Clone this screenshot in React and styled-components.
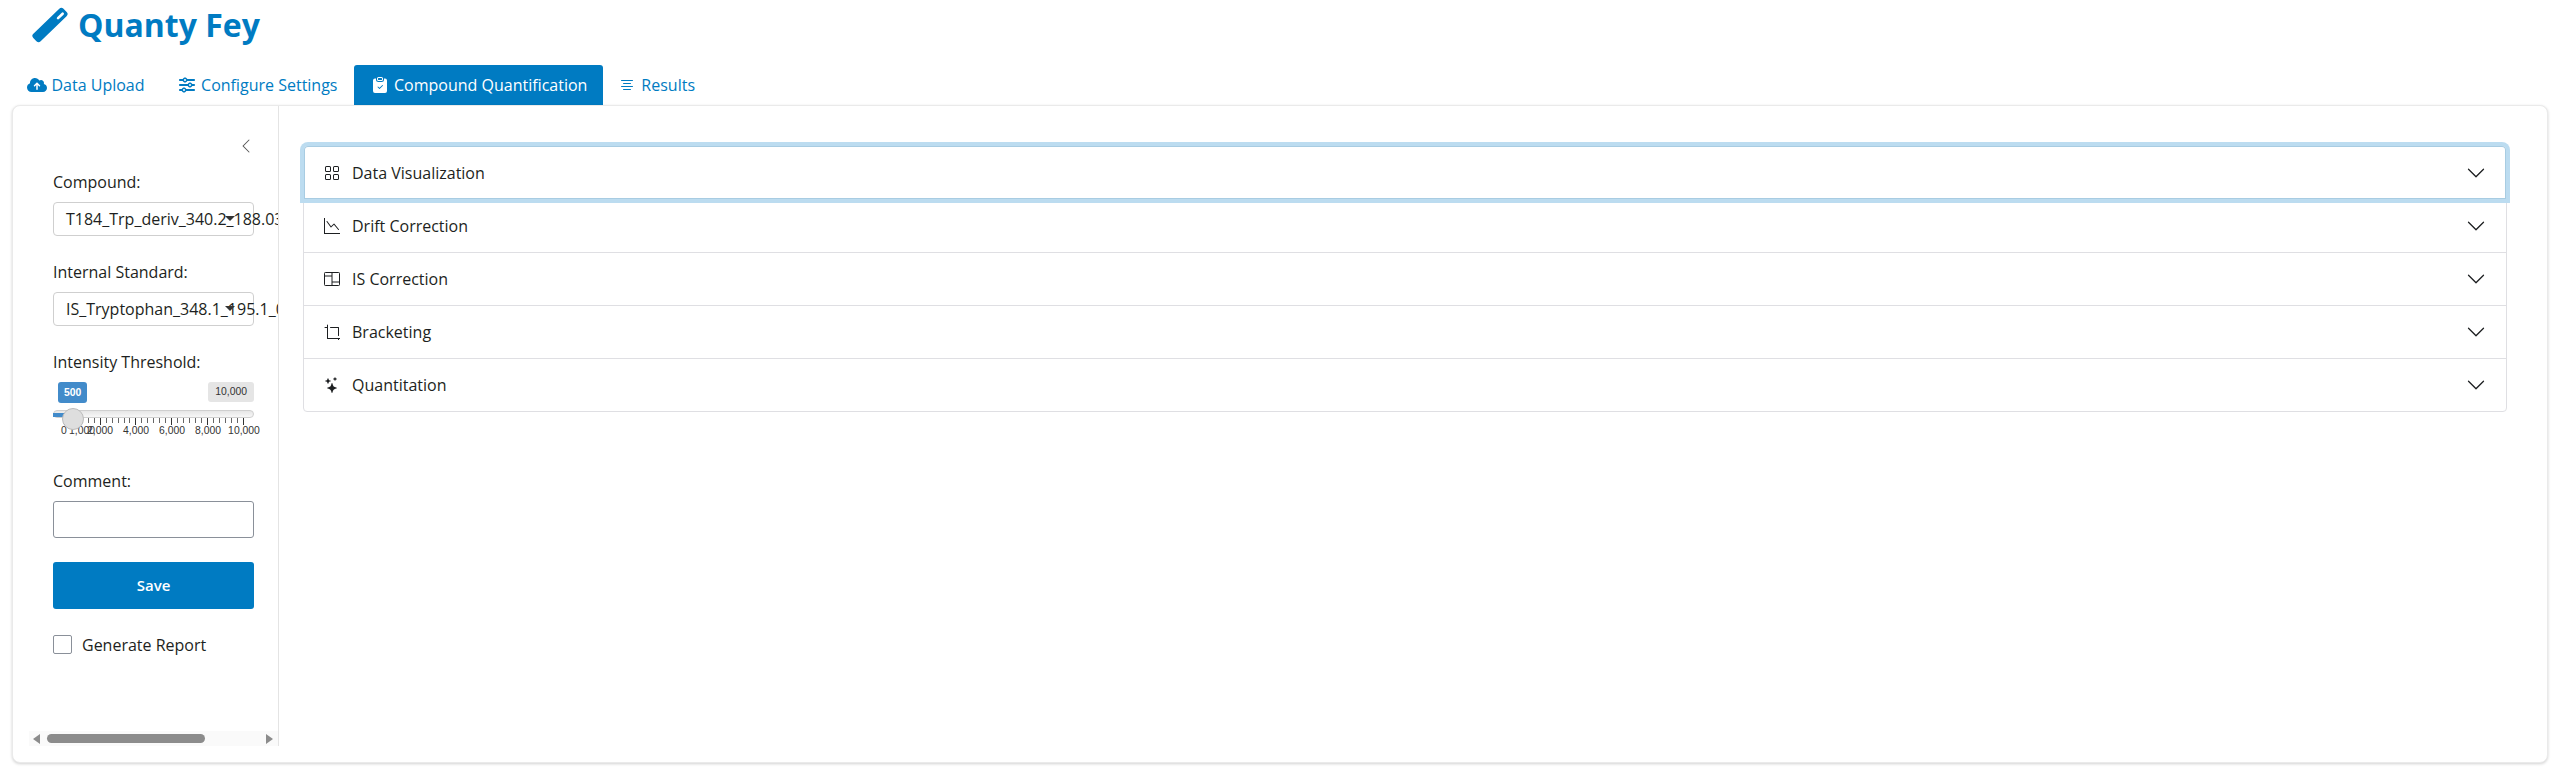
import React from "react";
import styled, { createGlobalStyle } from "styled-components";
import {
  BsClipboardCheckFill,
  BsTextCenter,
  BsGrid,
  BsGraphDown,
  BsCrop,
  BsStars,
  BsChevronDown,
  BsChevronLeft,
} from "react-icons/bs";
import { FaCloudArrowUp, FaSliders } from "react-icons/fa6";

const Global = createGlobalStyle`
  html, body { margin: 0; padding: 0; background: #fff; }
  * { box-sizing: border-box; }
  body {
    font-family: "Open Sans", "Liberation Sans", sans-serif;
    font-size: 16px;
    color: #1d1f21;
  }
`;

const Page = styled.div`
  width: 2559px;
  height: 783px;
  display: flex;
  flex-direction: column;
  overflow: hidden;
`;

const Header = styled.header`
  height: 65px;
  padding: 7px 0 0 32px;
  display: flex;
  align-items: flex-start;
  gap: 8px;
  color: #007bc2;
`;

const Title = styled.h1`
  margin: 0;
  font-size: 32px;
  line-height: 36px;
  font-weight: 700;
  color: #007bc2;
`;

const Tabs = styled.nav`
  height: 40px;
  padding-left: 11px;
  display: flex;
`;

const Tab = styled.a`
  height: 40px;
  padding: 0 16px;
  display: flex;
  align-items: center;
  gap: ${(p) => (p.$narrow ? 6 : 4.5)}px;
  border-radius: 3px 3px 0 0;
  color: ${(p) => (p.$active ? "#fff" : "#007bc2")};
  background: ${(p) => (p.$active ? "#007bc2" : "transparent")};
`;

const TabIcon = styled.span`
  width: ${(p) => (p.$narrow ? 16 : 20)}px;
  height: 20px;
  display: flex;
  align-items: center;
  justify-content: center;
`;

const Card = styled.main`
  margin: 0 11px 0 12px;
  height: 658px;
  display: flex;
  border: 1px solid #eaeaea;
  border-radius: 8px;
  box-shadow: 0 1px 3px rgba(0, 0, 0, 0.18);
  background: #fff;
  overflow: hidden;
`;

const Sidebar = styled.aside`
  width: 266px;
  height: 640px;
  flex: none;
  border-right: 1px solid #e4e4e4;
  display: flex;
  flex-direction: column;
  overflow: hidden;
`;

const SidebarBody = styled.div`
  flex: 1;
  padding: 0 0 0 40px;
  overflow: hidden;
`;

const CollapseRow = styled.div`
  width: 201px;
  height: 65px;
  padding-top: 32px;
  display: flex;
  justify-content: flex-end;
  color: #555;
`;

const Field = styled.div`
  width: 201px;
  margin-bottom: ${(p) => p.$gap ?? 25}px;
`;

const Label = styled.div`
  height: 22px;
  line-height: 22px;
  margin-bottom: 9px;
`;

const Select = styled.div`
  position: relative;
  height: 34px;
  padding-left: 12px;
  line-height: 33px;
  white-space: nowrap;
  border: 1px solid #cfcfcf;
  border-radius: 4px;
  background: #fff;
`;

const Caret = styled.span`
  position: absolute;
  right: 18px;
  top: 13px;
  width: 0;
  height: 0;
  border-left: 5px solid transparent;
  border-right: 5px solid transparent;
  border-top: 5px solid #333;
`;

const Badges = styled.div`
  height: 22px;
  padding-left: 5px;
  display: flex;
  justify-content: space-between;
  align-items: flex-start;
  font-family: "Liberation Sans", Arial, sans-serif;
  font-size: 10.4px;
`;

const Badge = styled.span`
  height: ${(p) => (p.$blue ? 21 : 20)}px;
  line-height: ${(p) => (p.$blue ? 21 : 20)}px;
  padding: 0 ${(p) => (p.$blue ? 6 : 7)}px;
  border-radius: 3px;
  color: ${(p) => (p.$blue ? "#fff" : "#333")};
  background: ${(p) => (p.$blue ? "#428bca" : "#e5e5e5")};
  font-weight: ${(p) => (p.$blue ? 700 : 400)};
`;

const Track = styled.div`
  position: relative;
  height: 8px;
  margin-top: 6px;
  border: 1px solid #cfcfcf;
  border-radius: 5px;
  background: linear-gradient(#e6e6e6, #f7f7f7);
`;

const TrackFill = styled.div`
  position: absolute;
  left: -1px;
  top: 2px;
  width: 14px;
  height: 4px;
  background: #428bca;
`;

const Thumb = styled.div`
  position: absolute;
  left: 8px;
  top: -3px;
  width: 22px;
  height: 22px;
  border: 1px solid #bbb;
  border-radius: 50%;
  background: #dedede;
  z-index: 1;
`;

const Grid = styled.div`
  position: relative;
  height: 33px;
  margin: 0 10px 0 11px;
  font-family: "Liberation Sans", Arial, sans-serif;
  font-size: 10.4px;
  color: #333;
`;

const Ticks = styled.div`
  height: 7px;
  display: flex;
  justify-content: space-between;
  align-items: flex-start;
`;

const Tick = styled.i`
  width: 1px;
  height: ${(p) => (p.$major ? 7 : 5)}px;
  background: ${(p) => (p.$major ? "#333" : "#666")};
`;

const TickLabel = styled.span`
  position: absolute;
  top: 7px;
  line-height: 12px;
  transform: translateX(-50%);
`;

const TextBox = styled.div`
  height: 37px;
  border: 1px solid #8a9099;
  border-radius: 3px;
  background: #fff;
`;

const Save = styled.button`
  display: block;
  width: 201px;
  height: 47px;
  margin-top: 24px;
  padding: 0 0 2px;
  border: 0;
  border-radius: 3px;
  background: #007bc2;
  color: #fff;
  font: 600 15px "Open Sans", sans-serif;
`;

const CheckRow = styled.label`
  margin-top: 26px;
  height: 19px;
  display: flex;
  align-items: center;
  gap: 10px;
`;

const CheckBox = styled.span`
  width: 19px;
  height: 19px;
  border: 1px solid #8a9099;
  border-radius: 2px;
`;

const Scrollbar = styled.div`
  height: 15px;
  flex: none;
  margin-left: 16px;
  display: flex;
  align-items: center;
  background: #fafafa;
`;

const ScrollThumb = styled.div`
  width: 158px;
  height: 9px;
  margin-left: 7px;
  border-radius: 5px;
  background: #8c8c8c;
`;

const ArrowLeft = styled.span`
  margin-left: 4px;
  border-top: 5px solid transparent;
  border-bottom: 5px solid transparent;
  border-right: 7px solid #8c8c8c;
`;

const ArrowRight = styled.span`
  margin-left: auto;
  margin-right: 5px;
  border-top: 5px solid transparent;
  border-bottom: 5px solid transparent;
  border-left: 7px solid #8c8c8c;
`;

const Content = styled.section`
  flex: 1;
  padding: 39px 24px 0;
`;

const Accordion = styled.div`
  width: 2204px;
  border: 1px solid #dfdfe3;
  border-radius: 4px;
`;

const Item = styled.div`
  position: relative;
  height: 53px;
  padding: 0 20px 0 20px;
  display: flex;
  align-items: center;
  gap: 12px;
  border-top: ${(p) => (p.$first ? 0 : "1px solid #dfdfe3")};
  ${(p) =>
    p.$focus &&
    `
    border-radius: 4px 4px 0 0;
    box-shadow: 0 0 0 1px #a8cce2 inset, 0 0 0 4px #bcdcf0;
    z-index: 1;
    background: #fff;
  `}
`;

const ItemTitle = styled.span`
  flex: 1;
`;

function SplitIcon() {
  return (
    <svg width="16" height="16" viewBox="0 0 16 16" fill="none" stroke="currentColor">
      <rect x="0.5" y="1.5" width="15" height="13" rx="0.8" />
      <path d="M8 1.500v13M.5 5h7.500M8 11h7.500" />
    </svg>
  );
}

const steps = [
  { title: "Data Visualization", Icon: BsGrid },
  { title: "Drift Correction", Icon: BsGraphDown },
  { title: "IS Correction", Icon: SplitIcon },
  { title: "Bracketing", Icon: BsCrop },
  { title: "Quantitation", Icon: BsStars },
];

const tickLabels = [0, 1000, 2000, 4000, 6000, 8000, 10000];

function Logo() {
  return (
    <svg width="38" height="36" viewBox="0 0 38 36">
      <rect x="-3" y="12.700" width="42" height="10.500" rx="3" fill="currentColor" transform="rotate(-44 18 18)" />
      <rect x="24" y="8" width="9" height="2.600" rx="1.300" fill="#fff" transform="rotate(-44 28 9.300)" />
    </svg>
  );
}

export default function App() {
  return (
    <Page>
      <Global />
      <Header>
        <Logo />
        <Title>Quanty Fey</Title>
      </Header>
      <Tabs>
        <Tab>
          <TabIcon>
            <FaCloudArrowUp size={20} />
          </TabIcon>
          Data Upload
        </Tab>
        <Tab>
          <TabIcon>
            <FaSliders size={16} />
          </TabIcon>
          Configure Settings
        </Tab>
        <Tab $active>
          <TabIcon>
            <BsClipboardCheckFill size={16} />
          </TabIcon>
          Compound Quantification
        </Tab>
        <Tab $narrow>
          <TabIcon $narrow>
            <BsTextCenter size={16} />
          </TabIcon>
          Results
        </Tab>
      </Tabs>
      <Card>
        <Sidebar>
          <SidebarBody>
            <CollapseRow>
              <BsChevronLeft size={16} />
            </CollapseRow>
            <Field>
              <Label>Compound:</Label>
              <Select>
                T184_Trp_deriv_340.2_188.03
                <Caret />
              </Select>
            </Field>
            <Field>
              <Label>Internal Standard:</Label>
              <Select>
                IS_Tryptophan_348.1_195.1_01
                <Caret />
              </Select>
            </Field>
            <Field $gap={19}>
              <Label>Intensity Threshold:</Label>
              <Badges>
                <Badge $blue>500</Badge>
                <Badge>10,000</Badge>
              </Badges>
              <Track>
                <TrackFill />
                <Thumb />
              </Track>
              <Grid>
                <Ticks>
                  {Array.from({ length: 31 }, (_, i) => (
                    <Tick key={i} $major={i % 6 === 0} />
                  ))}
                </Ticks>
                {tickLabels.map((v) => (
                  <TickLabel key={v} style={{ left: `${v / 100}%` }}>
                    {v.toLocaleString("en-US")}
                  </TickLabel>
                ))}
              </Grid>
            </Field>
            <Field $gap={0}>
              <Label>Comment:</Label>
              <TextBox />
            </Field>
            <Save>Save</Save>
            <CheckRow>
              <CheckBox />
              Generate Report
            </CheckRow>
          </SidebarBody>
          <Scrollbar>
            <ArrowLeft />
            <ScrollThumb />
            <ArrowRight />
          </Scrollbar>
        </Sidebar>
        <Content>
          <Accordion>
            {steps.map(({ title, Icon }, i) => (
              <Item key={title} $focus={i === 0} $first={i === 0}>
                <Icon size={16} />
                <ItemTitle>{title}</ItemTitle>
                <BsChevronDown size={20} />
              </Item>
            ))}
          </Accordion>
        </Content>
      </Card>
    </Page>
  );
}
